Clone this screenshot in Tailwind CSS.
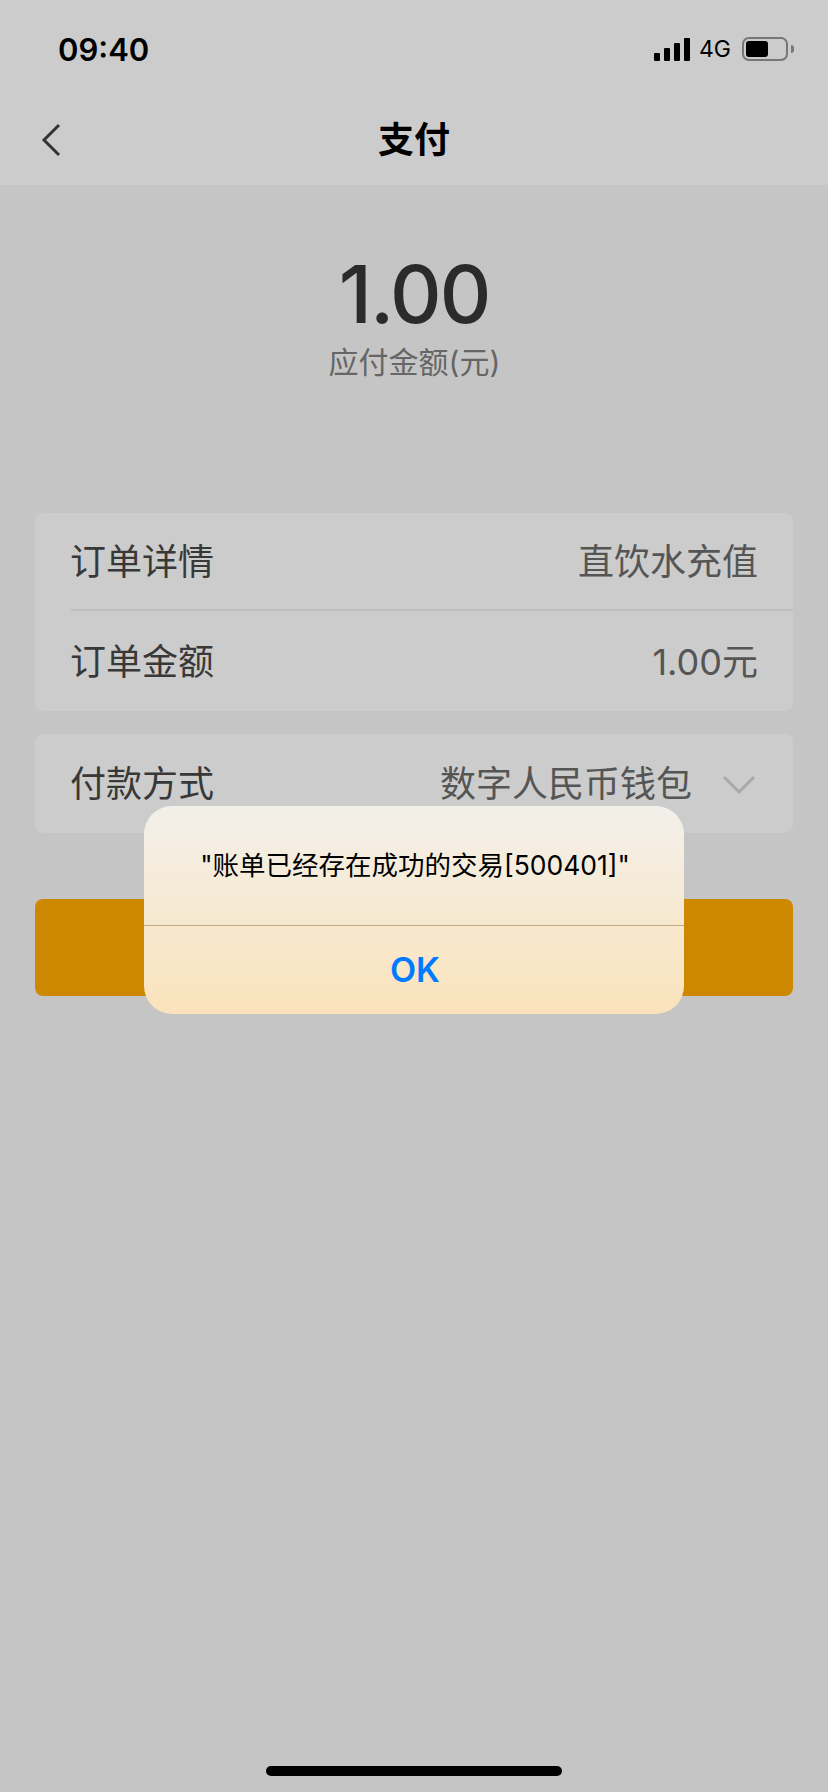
<!DOCTYPE html>
<html lang="zh-CN">
<head>
  <meta charset="UTF-8" />
  <meta name="viewport" content="width=device-width, initial-scale=1" />
  <title>支付</title>
  <script src="https://cdn.jsdelivr.net/npm/@tailwindcss/browser@4"></script>
</head>
<body class="relative h-[1792px] w-[828px] overflow-hidden bg-[#c5c5c5] font-['Inter','Noto_Sans_CJK_SC',sans-serif]">

  <header class="h-[185px] bg-[#cccccc]">
    <!-- status bar -->
    <div class="flex h-[98px] items-center justify-between pl-[58px] pr-[34px]">
      <span class="mt-[1px] text-[31px] leading-none font-semibold text-black">09:40</span>
      <div class="flex items-center">
        <div class="flex items-end gap-[4px]">
          <i class="h-[8px] w-[6px] rounded-[1px] bg-black"></i>
          <i class="h-[13px] w-[6px] rounded-[1px] bg-black"></i>
          <i class="h-[18px] w-[6px] rounded-[1px] bg-black"></i>
          <i class="h-[23px] w-[6px] rounded-[1px] bg-black"></i>
        </div>
        <span class="ml-[9px] text-[23px] leading-none text-black">4G</span>
        <div class="ml-[11px] flex h-[24px] w-[46px] rounded-[7px] border-2 border-[#777777] p-[2px]">
          <div class="h-full w-[22px] rounded-[3px] bg-black"></div>
        </div>
        <div class="ml-[3px] h-[8px] w-[3px] rounded-r-full bg-[#777777]"></div>
      </div>
    </div>
    <!-- nav -->
    <div class="relative flex h-[87px] items-center justify-center">
      <svg class="absolute left-[40px] top-[24px]" width="24" height="36" viewBox="0 0 24 36" fill="none" stroke="#333333" stroke-width="3">
        <path d="M19 3 4 18l15 15" />
      </svg>
      <h1 class="mb-[3px] text-[36px] leading-none font-bold text-black">支付</h1>
    </div>
  </header>

  <main class="px-[35px]">
    <section class="flex h-[328px] flex-col items-center pt-[69px]">
      <div class="text-[80px] leading-[80px] font-medium tracking-[-2px] text-[#2b2b2b]">1.00</div>
      <div class="mt-[8px] ml-[1px] text-[30px] leading-[40px] text-[#666666]">应付金额(元)</div>
    </section>

    <section class="rounded-[8px] bg-[#cccccc] pl-[36px] text-[36px] leading-none">
      <div class="flex h-[98px] items-center justify-between border-b-2 border-[#bcbcbc] pr-[35px] pt-[2px]">
        <span class="-ml-[1px] text-[#383838]">订单详情</span>
        <span class="text-[#555555]">直饮水充值</span>
      </div>
      <div class="flex h-[100px] items-center justify-between pr-[35px] pt-[2px]">
        <span class="-ml-[1px] text-[#383838]">订单金额</span>
        <span class="text-[#555555]">1.00元</span>
      </div>
    </section>

    <section class="mt-[23px] flex h-[99px] items-center justify-between rounded-[8px] bg-[#cccccc] pl-[36px] pr-[38px] text-[36px] leading-none">
      <span class="-ml-[1px] text-[#383838]">付款方式</span>
      <div class="flex items-center gap-[31px]">
        <span class="text-[#555555]">数字人民币钱包</span>
        <svg class="mt-[3px]" width="32" height="20" viewBox="0 0 32 20" fill="none" stroke="#a8a8a8" stroke-width="3">
          <path d="M1 2l15 15L31 2" />
        </svg>
      </div>
    </section>

    <div class="mt-[66px] h-[97px] rounded-[8px] bg-[#cc8800]"></div>
  </main>

  <!-- alert -->
  <div class="absolute left-[144px] top-[806px] w-[540px] overflow-hidden rounded-[28px] bg-gradient-to-b from-[#f3f0ea] to-[#fae3bb]">
    <div class="flex h-[120px] items-center justify-center border-b border-[#c4a97f] pl-[2px] text-[26.5px] leading-none text-black">"账单已经存在成功的交易[500401]"</div>
    <div class="flex h-[88px] items-center justify-center pl-[2px] text-[34px] leading-none font-semibold text-[#007aff]">OK</div>
  </div>

  <!-- home indicator -->
  <div class="absolute bottom-[16px] left-[266px] h-[10px] w-[296px] rounded-full bg-black"></div>
</body>
</html>
